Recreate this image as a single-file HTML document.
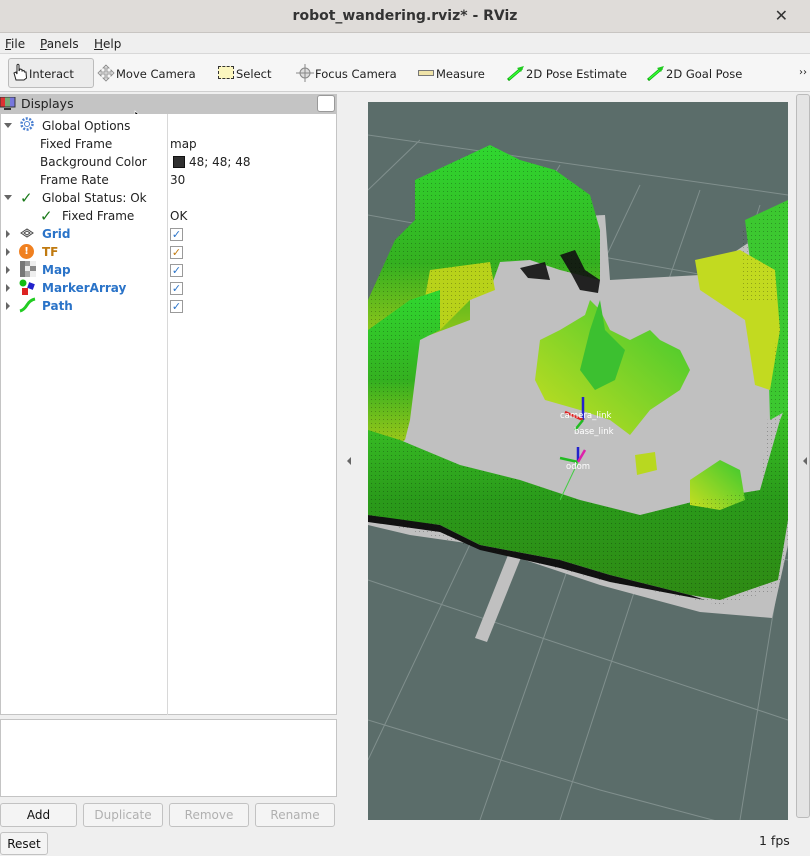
<!DOCTYPE html>
<html><head><style>
*{box-sizing:border-box;margin:0;padding:0}
body{width:810px;height:856px;overflow:hidden;background:#efefef;font-family:"DejaVu Sans","Liberation Sans",sans-serif;font-size:12px;color:#222;position:relative}
.a{position:absolute}
.title{left:0;top:0;width:810px;height:33px;background:#dfdcd9;border-bottom:1px solid #c8c5c2;text-align:center;line-height:32px;font-size:14px;font-weight:bold;color:#333}
.menu{top:34px;left:0;width:810px;height:20px;background:#efefef;border-bottom:1px solid #d8d8d8}
.menu span{position:absolute;top:3px}
.tb{top:54px;left:0;width:810px;height:38px;background:#f6f6f6;border-bottom:1px solid #cfcfcf}
.tb span{position:absolute;top:13px;font-size:11.5px}
.tree{left:0;top:114px;width:337px;height:601px;background:#fff;border:1px solid #c4c4c4;border-top:none}
.row{position:absolute;font-size:12px;height:18px;line-height:18px}
.blue{color:#2a73c8;font-weight:bold}
.cb{position:absolute;left:169px;width:13px;height:13px;border:1px solid #9a9a9a;background:#fff;font-size:11px;line-height:11px;text-align:center;color:#2a73c8}
.btn{position:absolute;top:803px;height:24px;border:1px solid #c2c2c2;border-radius:3px;background:#f4f4f4;text-align:center;line-height:22px;font-size:12px;color:#b0b0b0}
.arrow{width:0;height:0;border-left:4px solid transparent;border-right:4px solid transparent;border-top:5px solid #666}
.tri{width:0;height:0;border-top:4px solid transparent;border-bottom:4px solid transparent;border-left:4px solid #666}
</style></head><body>
<div class="a title">robot_wandering.rviz* - RViz</div>
<div class="a" style="right:22px;top:6px;font-size:16px;font-weight:bold;color:#333">✕</div>
<div class="a menu"><span style="left:5px"><u>F</u>ile</span><span style="left:40px"><u>P</u>anels</span><span style="left:94px"><u>H</u>elp</span></div>
<div class="a tb">
<div class="a" style="left:8px;top:4px;width:86px;height:30px;border:1px solid #bcbcbc;border-radius:3px;background:#ececec"></div>
<svg class="a" style="left:11px;top:8px" width="18" height="20"><path d="M5 18 L3 11 L5 10 L6 12 L6 3 Q7 1.5 8 3 L8 9 L9 7 L11 7.5 L11 9 L13 8.5 L13.5 10 L15 10 L15.5 16 L13 18 Z" fill="#fff" stroke="#222" stroke-width="1"/></svg>
<span style="left:29px">Interact</span>
<svg class="a" style="left:97px;top:10px" width="18" height="18"><path d="M9 1 L12 4 L10 4 L10 8 L14 8 L14 6 L17 9 L14 12 L14 10 L10 10 L10 14 L12 14 L9 17 L6 14 L8 14 L8 10 L4 10 L4 12 L1 9 L4 6 L4 8 L8 8 L8 4 L6 4Z" fill="#ddd" stroke="#888" stroke-width=".8"/></svg>
<span style="left:116px">Move Camera</span>
<div class="a" style="left:218px;top:12px;width:16px;height:13px;background:#fbf6bf;border:1px dashed #333"></div>
<span style="left:236px">Select</span>
<svg class="a" style="left:296px;top:10px" width="18" height="18"><circle cx="9" cy="9" r="5" fill="#ddd" stroke="#888"/><path d="M9 0V18M0 9H18" stroke="#888"/></svg>
<span style="left:315px">Focus Camera</span>
<div class="a" style="left:418px;top:16px;width:16px;height:6px;background:#efe3a8;border:1px solid #777"></div>
<span style="left:436px">Measure</span>
<svg class="a" style="left:507px;top:11px" width="18" height="16"><path d="M1 15 L15 3" stroke="#1a1" stroke-width="3"/><path d="M2 14 L14 4" stroke="#3f3" stroke-width="1.5"/><path d="M17 1 L10 3 L14 7Z" fill="#2c2"/></svg>
<span style="left:526px">2D Pose Estimate</span>
<svg class="a" style="left:647px;top:11px" width="18" height="16"><path d="M1 15 L15 3" stroke="#1a1" stroke-width="3"/><path d="M2 14 L14 4" stroke="#3f3" stroke-width="1.5"/><path d="M17 1 L10 3 L14 7Z" fill="#2c2"/></svg>
<span style="left:666px">2D Goal Pose</span>
<span style="left:799px;font-size:10px">››</span>
</div>
<div class="a" style="left:0;top:94px;width:337px;height:20px;background:#c4c4c4"></div>
<svg class="a" style="left:0;top:97px" width="16" height="15"><rect x="0" y="0" width="15" height="10" fill="#d33"/><rect x="5" y="0" width="5" height="10" fill="#7a7"/><rect x="10" y="0" width="5" height="10" fill="#77d"/><rect x="0" y="0" width="15" height="10" fill="none" stroke="#333"/><rect x="4" y="11" width="7" height="2" fill="#333"/></svg>
<div class="a" style="left:21px;top:96px;font-size:12.5px">Displays</div>
<div class="a" style="left:317px;top:95px;width:18px;height:17px;background:#fff;border:1px solid #999;border-radius:3px"></div>
<svg class="a" style="left:134px;top:110px" width="10" height="16"><path d="M1 1 L1 13 L4 10 L6 15 L8 14 L6 9 L10 9Z" fill="#000" stroke="#fff" stroke-width=".7"/></svg>
<div class="a tree">
<div class="a" style="left:166px;top:0;width:1px;height:601px;background:#d8d8d8"></div>
<div class="a arrow" style="left:3px;top:9px"></div>
<svg class="a" style="left:19px;top:3px" width="14" height="14"><circle cx="7" cy="7" r="5.5" fill="none" stroke="#4a7fd0" stroke-width="2.5" stroke-dasharray="2 1.5"/><circle cx="7" cy="7" r="2.5" fill="#fff" stroke="#4a7fd0"/></svg>
<div class="row" style="left:41px;top:3px">Global Options</div>
<div class="row" style="left:39px;top:21px">Fixed Frame</div><div class="row" style="left:169px;top:21px">map</div>
<div class="row" style="left:39px;top:39px">Background Color</div>
<div class="a" style="left:172px;top:42px;width:12px;height:12px;background:#303030;border:1px solid #111"></div>
<div class="row" style="left:188px;top:39px">48; 48; 48</div>
<div class="row" style="left:39px;top:57px">Frame Rate</div><div class="row" style="left:169px;top:57px">30</div>
<div class="a arrow" style="left:3px;top:81px"></div>
<div class="row" style="left:19px;top:75px;color:#1a7a1a;font-size:15px">✓</div>
<div class="row" style="left:41px;top:75px">Global Status: Ok</div>
<div class="row" style="left:39px;top:93px;color:#1a7a1a;font-size:15px">✓</div>
<div class="row" style="left:61px;top:93px">Fixed Frame</div><div class="row" style="left:169px;top:93px">OK</div>
<div class="a tri" style="left:5px;top:116px"></div>
<svg class="a" style="left:19px;top:114px" width="14" height="10"><path d="M1 5 L7 1 L13 5 L7 9Z M4 5 L7 3 L10 5 L7 7Z" fill="none" stroke="#444"/></svg>
<div class="row blue" style="left:41px;top:111px">Grid</div><div class="cb" style="top:114px">✓</div>
<div class="a tri" style="left:5px;top:134px"></div>
<div class="a" style="left:18px;top:130px;width:15px;height:15px;border-radius:50%;background:#f08020;color:#fff;font-size:10px;font-weight:bold;text-align:center;line-height:15px">!</div>
<div class="row" style="left:41px;top:129px;color:#c07a10;font-weight:bold">TF</div><div class="cb" style="top:132px;color:#c07a10">✓</div>
<div class="a tri" style="left:5px;top:152px"></div>
<svg class="a" style="left:19px;top:147px" width="16" height="16"><rect width="16" height="16" fill="#eee"/><rect x="0" y="0" width="5" height="16" fill="#777"/><rect x="5" y="0" width="5" height="5" fill="#999"/><rect x="10" y="5" width="6" height="5" fill="#888"/><rect x="5" y="10" width="5" height="6" fill="#aaa"/></svg>
<div class="row blue" style="left:41px;top:147px">Map</div><div class="cb" style="top:150px">✓</div>
<div class="a tri" style="left:5px;top:170px"></div>
<svg class="a" style="left:18px;top:164px" width="18" height="18"><circle cx="4" cy="5" r="3.5" fill="#1b1"/><rect x="9" y="5" width="6" height="6" fill="#22c" transform="rotate(20 12 8)"/><rect x="3" y="10" width="6" height="7" fill="#d22"/></svg>
<div class="row blue" style="left:41px;top:165px">MarkerArray</div><div class="cb" style="top:168px">✓</div>
<div class="a tri" style="left:5px;top:188px"></div>
<svg class="a" style="left:18px;top:183px" width="18" height="16"><path d="M1 14 Q5 13 8 8 Q11 3 16 2" fill="none" stroke="#2c2" stroke-width="3"/></svg>
<div class="row blue" style="left:41px;top:183px">Path</div><div class="cb" style="top:186px">✓</div>
</div>
<div class="a" style="left:0;top:719px;width:337px;height:78px;background:#fff;border:1px solid #c4c4c4"></div>
<div class="btn" style="left:0;width:77px;color:#111">Add</div>
<div class="btn" style="left:83px;width:80px">Duplicate</div>
<div class="btn" style="left:169px;width:80px">Remove</div>
<div class="btn" style="left:255px;width:80px">Rename</div>
<div class="btn" style="left:0;top:832px;width:48px;height:23px;color:#111">Reset</div>
<div class="a" style="left:347px;top:457px;border-top:4px solid transparent;border-bottom:4px solid transparent;border-right:4px solid #666"></div>
<div class="a" style="left:796px;top:94px;width:14px;height:724px;background:#e4e4e4;border:1px solid #bbb;border-radius:3px"></div>
<div class="a" style="left:803px;top:457px;border-top:4px solid transparent;border-bottom:4px solid transparent;border-right:4px solid #666"></div>
<div class="a" style="left:759px;top:833px;font-size:12.5px">1 fps</div>
<svg class="a" style="left:368px;top:102px" width="420" height="718" viewBox="368 102 420 718">
<defs>
<linearGradient id="g1" x1="0" y1="0" x2="0" y2="1"><stop offset="0" stop-color="#30d830"/><stop offset=".55" stop-color="#34b020"/><stop offset="1" stop-color="#b0cc18"/></linearGradient>
<linearGradient id="g2" x1="0" y1="0" x2="0" y2="1"><stop offset="0" stop-color="#3cc828"/><stop offset=".5" stop-color="#2a9a1a"/><stop offset="1" stop-color="#2f8a14"/></linearGradient>
<linearGradient id="g3" x1="0" y1="1" x2="1" y2="0"><stop offset="0" stop-color="#c8de20"/><stop offset="1" stop-color="#38c830"/></linearGradient>
<pattern id="vox" width="4" height="4" patternUnits="userSpaceOnUse"><rect x="3" y="3" width="1" height="1" fill="#000" opacity=".25"/></pattern>
<clipPath id="vc"><path d="M415 180 L490 145 L520 160 L555 170 L590 195 L600 230 L600 280 L560 270 L530 260 L500 262 L490 290 L470 300 L440 330 L410 340 L410 420 L405 440 L400 440 L460 465 L520 480 L580 500 L640 515 L700 500 L760 490 L770 400 L780 300 L740 300 L740 230 L788 200 L788 540 L778 590 L720 605 L600 580 L480 548 L368 520 L368 300 L395 240 L415 220Z"/></clipPath>
</defs>
<rect x="368" y="102" width="420" height="718" fill="#5b6d6a"/>
<g stroke="#8a9896" stroke-width="1" fill="none" opacity=".8">
<path d="M368 135 L788 195 M368 215 L788 290 M368 330 L788 410 M368 470 L788 560 M368 580 L788 720 M368 720 L600 790 M600 790 L788 840"/>
<path d="M420 140 L368 190 M560 165 L368 480 M640 185 L368 760 M700 190 L480 820 M760 205 L560 820 M788 520 L740 820"/>
</g>
<path d="M400 240 L500 220 L605 215 L610 280 L700 275 L760 235 L788 250 L788 545 L772 618 L700 612 L600 585 L480 545 L410 535 L368 525 L368 380Z" fill="#c0c0c0"/>
<path d="M522 555 L487 642 L475 638 L508 555Z" fill="#c0c0c0"/>
<path d="M415 180 L490 145 L520 160 L555 170 L590 195 L600 230 L600 280 L560 270 L530 260 L500 262 L490 290 L470 290 L470 320 L430 335 L410 330 L395 350 L368 360 L368 300 L395 240 L415 220Z" fill="url(#g1)"/>
<path d="M430 270 L490 262 L495 290 L470 300 L440 330 L420 325Z" fill="#b8d21a"/>
<path d="M368 330 L410 300 L440 290 L440 330 L420 340 L410 420 L405 440 L390 450 L368 455Z" fill="url(#g1)"/>
<path d="M368 430 L400 440 L460 465 L520 480 L580 500 L640 515 L700 500 L760 490 L780 420 L788 400 L788 520 L778 580 L720 600 L690 595 L610 575 L560 560 L480 545 L440 525 L400 520 L368 515Z" fill="url(#g2)"/>
<path d="M745 220 L788 200 L788 410 L770 420 L768 350 L755 300Z" fill="#3cc830"/>
<path d="M695 260 L740 250 L775 270 L780 330 L770 390 L755 385 L745 320 L700 290Z" fill="#c2da20"/>
<path d="M540 340 L560 330 L585 315 L590 300 L600 310 L610 330 L630 340 L650 330 L660 340 L680 350 L690 370 L680 390 L650 410 L630 435 L610 420 L580 410 L545 400 L535 380Z" fill="url(#g3)"/>
<path d="M590 330 L600 300 L605 330 L625 350 L615 380 L595 390 L580 370Z" fill="#3cc030"/>
<path d="M690 480 L720 460 L740 470 L745 500 L720 510 L690 505Z" fill="url(#g3)"/>
<path d="M635 455 L655 452 L657 470 L637 475Z" fill="#b8d820"/>
<path d="M368 515 L440 525 L480 545 L560 560 L610 575 L690 595 L720 605 L705 600 L610 582 L560 568 L480 550 L440 532 L368 522Z" fill="#111"/>
<path d="M560 255 L575 250 L585 270 L600 280 L598 293 L580 290 L572 275Z M520 268 L545 262 L550 280 L528 278Z" fill="#111" opacity=".9"/>
<rect x="368" y="102" width="420" height="718" fill="url(#vox)" clip-path="url(#vc)"/>
<g stroke-width="2.5"><path d="M583 420 L583 397" stroke="#22c"/><path d="M583 420 L565 412" stroke="#d22"/><path d="M583 420 L575 430" stroke="#2b2"/><path d="M578 462 L578 447" stroke="#22c"/><path d="M578 462 L560 458" stroke="#2b2"/><path d="M578 462 L585 450" stroke="#d2a"/></g>
<path d="M578 462 L560 500" stroke="#4c4" stroke-width="1"/>
<g fill="#fff" font-family="DejaVu Sans,sans-serif" font-size="8.5"><text x="560" y="418">camera_link</text><text x="574" y="434">base_link</text><text x="566" y="469">odom</text></g>
</svg>
</body></html>
